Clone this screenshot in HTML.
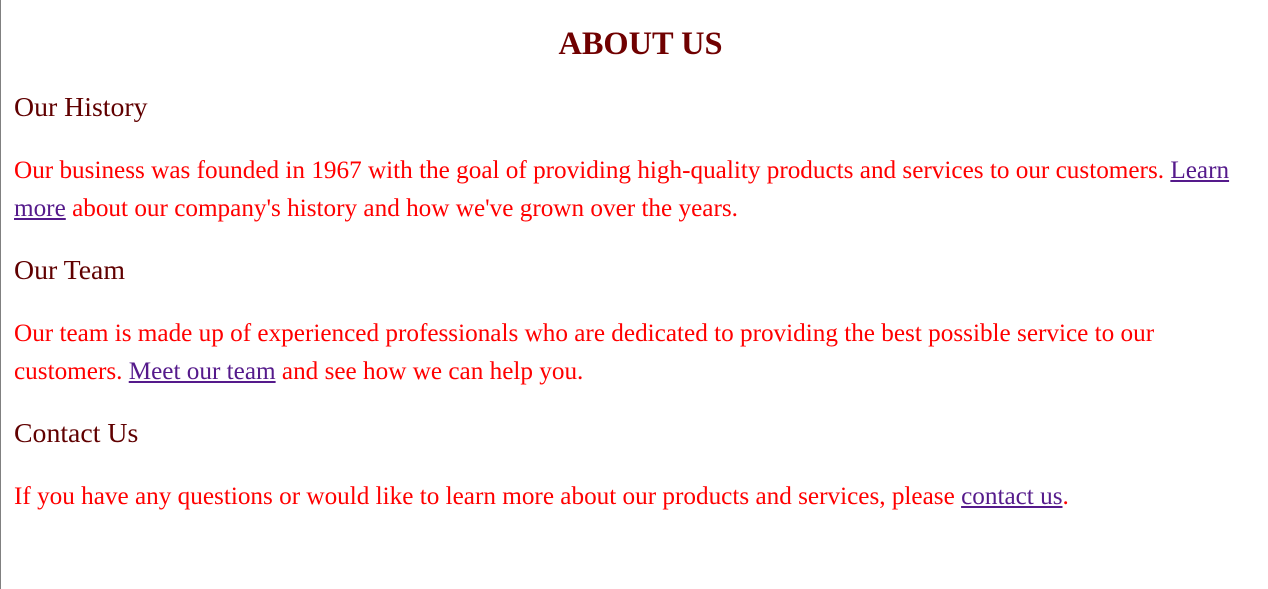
<!DOCTYPE html>
<html><head><meta charset="utf-8"><style>
html,body{margin:0;padding:0;background:#fff;}
body{width:1267px;height:589px;border-left:1px solid #808080;font-family:"Liberation Serif",serif;box-sizing:border-box;padding:1px 14px 0 13px;overflow:hidden}
h1{margin:0;padding-top:25px;font-size:32.4px;line-height:37px;text-align:center;color:#700000;font-weight:bold;position:relative;left:7px}
h2{margin:30px 0 0;font-size:27.8px;line-height:30px;font-weight:normal;color:#600000}
h2+p{margin-top:29px}
p{margin:0;font-size:25.2px;line-height:38px;color:#ff0000}
p+h2{margin-top:28px}
a{color:#551a8b;text-decoration:underline}
</style></head><body>
<h1>ABOUT US</h1>
<h2>Our History</h2>
<p>Our business was founded in 1967 with the goal of providing high-quality products and services to our customers. <a>Learn more</a> about our company's history and how we've grown over the years.</p>
<h2>Our Team</h2>
<p>Our team is made up of experienced professionals who are dedicated to providing the best possible service to our customers. <a>Meet our team</a> and see how we can help you.</p>
<h2>Contact Us</h2>
<p>If you have any questions or would like to learn more about our products and services, please <a>contact us</a>.</p>
</body></html>
